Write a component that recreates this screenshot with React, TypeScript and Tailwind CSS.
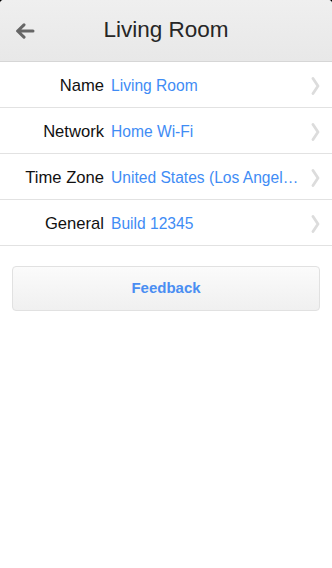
import React from 'react';

const rows = [
  { label: 'Name', value: 'Living Room' },
  { label: 'Network', value: 'Home Wi-Fi' },
  { label: 'Time Zone', value: 'United States (Los Angeles)' },
  { label: 'General', value: 'Build 12345' },
];

const Chevron: React.FC = () => (
  <svg width="9" height="18" viewBox="0 0 9 18" className="shrink-0">
    <path d="M2 1.5 L7 9 L2 16.5" fill="none" stroke="#dcdcdc" strokeWidth="2.8" strokeLinecap="round" strokeLinejoin="round" />
  </svg>
);

const App: React.FC = () => {
  return (
    <div className="min-h-[568px] w-[332px] bg-black" style={{ fontFamily: '"Liberation Sans", Arial, sans-serif' }}>
      <div className="min-h-[568px] overflow-hidden rounded-t-[4px] bg-white">
        <header className="relative flex h-[62px] items-center justify-center border-b border-[#d6d6d6] bg-gradient-to-b from-[#efefef] to-[#e8e8e8]">
          <svg width="20" height="16" viewBox="0 0 20 16" className="absolute left-[15px] top-[23px]">
            <path d="M18 8 H3 M9 1.8 L2.6 8 L9 14.2" fill="none" stroke="#666" strokeWidth="3" strokeLinecap="round" strokeLinejoin="round" />
          </svg>
          <h1 className="text-[22.5px] leading-none text-[#262626]">Living Room</h1>
        </header>

        <div>
          {rows.map((r) => (
            <div key={r.label} className="flex h-[46px] items-center border-b border-[#e2e2e2] pr-[12px] pt-[3px]">
              <span className="w-[104px] shrink-0 text-right text-[16.6px] text-[#111]">{r.label}</span>
              <span className="ml-[7px] min-w-0 flex-1 truncate pr-[10px] text-[15.6px] text-[#3f8cf5]">{r.value}</span>
              <Chevron />
            </div>
          ))}
        </div>

        <div className="px-[12px] pt-[20px]">
          <button className="flex h-[45px] w-full items-center justify-center rounded-[4px] border border-[#e1e1e1] bg-gradient-to-b from-[#fbfbfb] to-[#f0f0f0] text-[15px] font-bold text-[#4a8ef2]">
            Feedback
          </button>
        </div>
      </div>
    </div>
  );
};

export default App;
